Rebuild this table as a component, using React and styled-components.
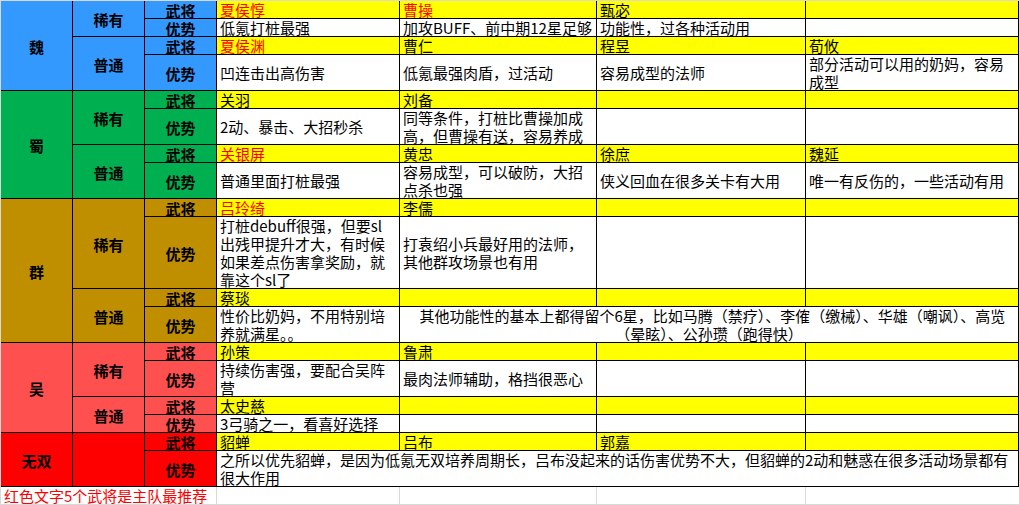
import React from "react";
import styled, { createGlobalStyle } from "styled-components";

const GlobalStyle = createGlobalStyle`
  html, body { margin: 0; padding: 0; background: #ffffff; }
  body {
    font-family: "Noto Sans CJK SC", "Noto Sans", sans-serif;
    color: #000000;
  }
`;

const YELLOW = "#FFFF00";
const RED_TEXT = "#FF0000";
const COLS = [71, 71, 71, 182, 196, 208, 212];

const FACTIONS = [
  {
    name: "魏",
    color: "#3399FF",
    groups: [
      {
        rarity: "稀有",
        rows: [
          { kind: "武将", h: 17, cells: [{ t: "夏侯惇", red: true }, { t: "曹操", red: true }, { t: "甄宓" }, { t: "" }] },
          { kind: "优势", h: 17, cells: [{ t: "低氪打桩最强" }, { t: "加攻BUFF、前中期12星足够" }, { t: "功能性，过各种活动用" }, { t: "" }] },
        ],
      },
      {
        rarity: "普通",
        rows: [
          { kind: "武将", h: 17, cells: [{ t: "夏侯渊", red: true }, { t: "曹仁" }, { t: "程昱" }, { t: "荀攸" }] },
          { kind: "优势", h: 35, cells: [{ t: "凹连击出高伤害" }, { t: "低氪最强肉盾，过活动" }, { t: "容易成型的法师" }, { t: "部分活动可以用的奶妈，容易\n成型" }] },
        ],
      },
    ],
  },
  {
    name: "蜀",
    color: "#00B050",
    groups: [
      {
        rarity: "稀有",
        rows: [
          { kind: "武将", h: 17, cells: [{ t: "关羽" }, { t: "刘备" }, { t: "" }, { t: "" }] },
          { kind: "优势", h: 35, cells: [{ t: "2动、暴击、大招秒杀" }, { t: "同等条件，打桩比曹操加成\n高，但曹操有送，容易养成" }, { t: "" }, { t: "" }] },
        ],
      },
      {
        rarity: "普通",
        rows: [
          { kind: "武将", h: 17, cells: [{ t: "关银屏", red: true }, { t: "黄忠" }, { t: "徐庶" }, { t: "魏延" }] },
          { kind: "优势", h: 35, cells: [{ t: "普通里面打桩最强" }, { t: "容易成型，可以破防，大招\n点杀也强" }, { t: "侠义回血在很多关卡有大用" }, { t: "唯一有反伤的，一些活动有用" }] },
        ],
      },
    ],
  },
  {
    name: "群",
    color: "#BF8F00",
    groups: [
      {
        rarity: "稀有",
        rows: [
          { kind: "武将", h: 17, cells: [{ t: "吕玲绮", red: true }, { t: "李儒" }, { t: "" }, { t: "" }] },
          {
            kind: "优势",
            h: 71,
            cells: [
              { t: "打桩debuff很强，但要sl\n出残甲提升才大，有时候\n如果差点伤害拿奖励，就\n靠这个sl了" },
              { t: "打袁绍小兵最好用的法师，\n其他群攻场景也有用" },
              { t: "" },
              { t: "" },
            ],
          },
        ],
      },
      {
        rarity: "普通",
        rows: [
          { kind: "武将", h: 17, cells: [{ t: "蔡琰" }, { t: "" }, { t: "" }, { t: "" }] },
          {
            kind: "优势",
            h: 35,
            cells: [
              { t: "性价比奶妈，不用特别培\n养就满星。。" },
              {
                t: "  其他功能性的基本上都得留个6星，比如马腾（禁疗）、李傕（缴械）、华雄（嘲讽）、高览\n（晕眩）、公孙瓒（跑得快）",
                span: 3,
                center: true,
              },
            ],
          },
        ],
      },
    ],
  },
  {
    name: "吴",
    color: "#FF5050",
    groups: [
      {
        rarity: "稀有",
        rows: [
          { kind: "武将", h: 17, cells: [{ t: "孙策" }, { t: "鲁肃" }, { t: "" }, { t: "" }] },
          { kind: "优势", h: 35, cells: [{ t: "持续伤害强，要配合吴阵\n营" }, { t: "最肉法师辅助，格挡很恶心" }, { t: "" }, { t: "" }] },
        ],
      },
      {
        rarity: "普通",
        rows: [
          { kind: "武将", h: 17, cells: [{ t: "太史慈" }, { t: "" }, { t: "" }, { t: "" }] },
          { kind: "优势", h: 17, cells: [{ t: "3弓骑之一，看喜好选择" }, { t: "" }, { t: "" }, { t: "" }] },
        ],
      },
    ],
  },
  {
    name: "无双",
    color: "#FF0000",
    groups: [
      {
        rarity: "",
        rows: [
          { kind: "武将", h: 17, cells: [{ t: "貂蝉" }, { t: "吕布" }, { t: "郭嘉" }, { t: "" }] },
          {
            kind: "优势",
            h: 35,
            cells: [
              {
                t: "之所以优先貂蝉，是因为低氪无双培养周期长，吕布没起来的话伤害优势不大，但貂蝉的2动和魅惑在很多活动场景都有\n很大作用",
                span: 4,
              },
            ],
          },
        ],
      },
    ],
  },
];

const Page = styled.div`
  width: 1018px;
  border-top: 1px solid #d9d9d9;
  border-left: 1px solid #d9d9d9;
  border-right: 1px solid #d9d9d9;
`;

const Sheet = styled.div`
  display: grid;
  grid-template-columns: ${COLS.map((c) => c + "px").join(" ")};
  grid-template-rows: ${(p) => p.$rows};
  gap: 1px;
  background: #000000;
  padding: 0 1px 1px 0;
`;

const Placed = styled.div`
  grid-row: ${(p) => p.$row} / span ${(p) => p.$rowSpan || 1};
  grid-column: ${(p) => p.$col} / span ${(p) => p.$colSpan || 1};
  min-width: 0;
  min-height: 0;
`;

const LabelCell = styled(Placed)`
  background: ${(p) => p.$bg};
  display: flex;
  align-items: center;
  justify-content: center;
  padding-top: 1px;
  box-sizing: border-box;
  font-size: 15px;
  font-weight: 700;
  line-height: 15px;
  white-space: nowrap;
`;

const DataCell = styled(Placed)`
  background: ${(p) => (p.$yellow ? YELLOW : "#ffffff")};
  color: ${(p) => (p.$red ? RED_TEXT : "#000000")};
  display: flex;
  flex-direction: column;
  justify-content: center;
  align-items: ${(p) => (p.$center ? "center" : "flex-start")};
  text-align: ${(p) => (p.$center ? "center" : "left")};
  padding-left: ${(p) => (p.$center ? 0 : 3)}px;
  padding-top: 1px;
  box-sizing: border-box;
  font-size: 15px;
  line-height: ${(p) => p.$lh}px;
  white-space: pre;
`;

const Footer = styled.div`
  display: grid;
  grid-template-columns: 215px 182px 196px 208px 213px;
  height: 17px;
  gap: 1px;
  background: #d9d9d9;
  border-bottom: 1px solid #d9d9d9;
`;

const FooterCell = styled.div`
  background: #ffffff;
  color: ${(p) => (p.$red ? RED_TEXT : "#000000")};
  font-size: 15px;
  line-height: 16px;
  padding: 1px 0 0 3px;
  white-space: nowrap;
`;

function buildSheet() {
  const items = [];
  const heights = [];
  let r = 1;
  FACTIONS.forEach((f, fi) => {
    const fStart = r;
    f.groups.forEach((g, gi) => {
      const gStart = r;
      g.rows.forEach((row, ri) => {
        heights.push(row.h + "px");
        items.push(
          <LabelCell key={`l-${fi}-${gi}-${ri}`} $row={r} $col={3} $bg={f.color}>
            {row.kind}
          </LabelCell>
        );
        let c = 4;
        row.cells.forEach((cell, ci) => {
          const lines = cell.t.split("\n");
          const lh = lines.length === 1 ? 16 : 18;
          items.push(
            <DataCell
              key={`d-${fi}-${gi}-${ri}-${ci}`}
              $row={r}
              $col={c}
              $colSpan={cell.span || 1}
              $yellow={row.kind === "武将"}
              $red={cell.red}
              $center={cell.center}
              $lh={lh}
            >
              {lines.map((ln, li) => (
                <span key={li}>{ln}</span>
              ))}
            </DataCell>
          );
          c += cell.span || 1;
        });
        r += 1;
      });
      items.push(
        <LabelCell key={`g-${fi}-${gi}`} $row={gStart} $rowSpan={r - gStart} $col={2} $bg={f.color}>
          {g.rarity}
        </LabelCell>
      );
    });
    items.push(
      <LabelCell key={`f-${fi}`} $row={fStart} $rowSpan={r - fStart} $col={1} $bg={f.color}>
        {f.name}
      </LabelCell>
    );
  });
  return { items, rows: heights.join(" ") };
}

export default function App() {
  const { items, rows } = buildSheet();
  return (
    <>
      <GlobalStyle />
      <Page>
        <Sheet $rows={rows}>{items}</Sheet>
        <Footer>
          <FooterCell $red>红色文字5个武将是主队最推荐</FooterCell>
          <FooterCell />
          <FooterCell />
          <FooterCell />
          <FooterCell />
        </Footer>
      </Page>
    </>
  );
}
